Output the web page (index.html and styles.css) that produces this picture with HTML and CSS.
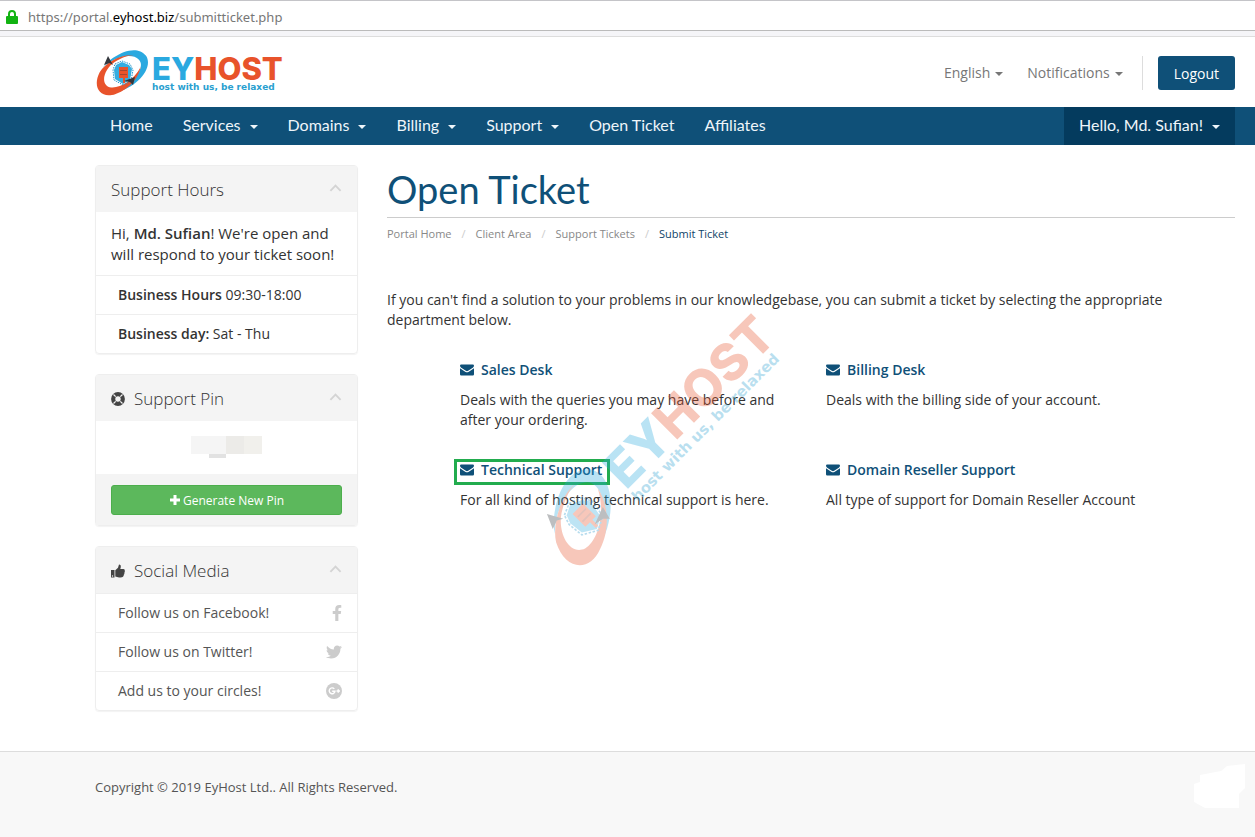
FILE: index.html
```html
<!DOCTYPE html>
<html lang="en">

<head>
    <meta charset="utf-8">
    <title>Open Ticket - EyHost</title>
    <link rel="stylesheet" href="styles.css">
</head>

<body>

    <!-- Shared icons -->
    <svg class="sprite" width="0" height="0" aria-hidden="true">
        <symbol id="logo-mark" viewBox="0 0 56 48">
            <g transform="translate(27 23) rotate(-36)">
                <path fill="#2aa9e0" fill-rule="evenodd" d="M-13 -14.500C-4 -19 28 -18 29 1C28 16 2 21 -17 13C4 16 22 10 21 0C19 -12 -2 -17 -13 -14.500Z" />
                <path fill="#e8532b" d="M19 -7C10 -15 -8 -17 -18 -13C-34 -5 -33 10 -18 14C-3 19 12 13 18 7C4 14 -13 12 -19 5C-25 -4 -12 -13 0 -12.500C8 -12 15 -10 19 -7Z" />
            </g>
            <path fill="#35ade0" d="M21 16L27 13L34 16L37 20L35 31L28 35L20 30L19 21Z" />
            <path fill="none" stroke="#2496cb" stroke-width="1" stroke-dasharray="1.500 1" d="M20 15L27 12L35 15L38 21L36 32L28 36L19 31L18 21Z" />
            <path fill="#e8532b" d="M24 18h9v11h-3v5h-2v-5h-4z" />
            <path stroke="#a8452f" stroke-width="1" d="M25 21.500h7M25 25.500h7" />
            <path fill="#33373d" d="M13 7L18 16L14.500 14L9 16Z" />
            <path fill="#33373d" d="M40 28L38 36L35 33L29 32Z" />
        </symbol>
        <symbol id="envelope" viewBox="0 0 14 12">
            <path fill="currentColor" d="M1.200 0.500h11.600Q14 0.500 14 1.800Q14 2.900 12.800 3.700L8.200 6.800Q7 7.500 5.800 6.800L1.200 3.700Q0 2.900 0 1.800Q0 0.500 1.200 0.500ZM0 4.200L5.200 7.700Q7 8.900 8.800 7.700L14 4.200V10.300Q14 11.500 12.800 11.500H1.200Q0 11.500 0 10.300Z" />
        </symbol>
        <symbol id="chevron" viewBox="0 0 14 8">
            <path fill="none" stroke="currentColor" stroke-width="2" d="M1.500 7L7 1.500L12.500 7" />
        </symbol>
    </svg>

    <div class="address-bar">
        <svg class="lock" viewBox="0 0 12 14" aria-hidden="true">
            <path fill="none" stroke="#12b312" stroke-width="2" d="M3 7V4a3 3 0 0 1 6 0v3" />
            <rect x="0" y="6" width="12" height="8" rx="1" fill="#12b312" />
        </svg>
        <span>https://portal.<b>eyhost.biz</b>/submitticket.php</span>
    </div>

    <header class="header wrap">
        <a href="#" aria-label="EyHost">
            <svg class="logo" viewBox="0 0 188 48">
                <use href="#logo-mark" width="56" height="48" />
                <text class="logo-name" x="57" y="31"><tspan fill="#2aa9e0">EY</tspan><tspan fill="#e8532b">HOST</tspan></text>
                <text class="logo-tag" x="57" y="41">host with us, be relaxed</text>
            </svg>
        </a>
        <div class="top-nav">
            <button class="top-link caret">English</button>
            <button class="top-link caret">Notifications</button>
            <button class="logout">Logout</button>
        </div>
    </header>

    <nav class="main-nav">
        <div class="wrap nav-inner">
            <a href="#">Home</a>
            <a href="#" class="caret">Services</a>
            <a href="#" class="caret">Domains</a>
            <a href="#" class="caret">Billing</a>
            <a href="#" class="caret">Support</a>
            <a href="#">Open Ticket</a>
            <a href="#">Affiliates</a>
            <a href="#" class="caret account">Hello, Md. Sufian!</a>
        </div>
    </nav>

    <div class="wrap page">
        <aside class="sidebar">
            <section class="panel">
                <h3>Support Hours <svg class="chevron"><use href="#chevron" /></svg></h3>
                <p class="greeting">Hi, <b>Md. Sufian</b>! We're open and will respond to your ticket soon!</p>
                <div class="row"><span><b>Business Hours</b> 09:30-18:00</span></div>
                <div class="row"><span><b>Business day:</b> Sat - Thu</span></div>
            </section>

            <section class="panel">
                <h3>
                    <svg class="title-icon" viewBox="0 0 14 14">
                        <circle cx="7" cy="7" r="4.800" fill="none" stroke="#444" stroke-width="4.200" />
                        <path stroke="#f5f5f5" stroke-width="1.200" d="M2.500 2.500L4.700 4.700M9.300 9.300L11.500 11.500M11.500 2.500L9.300 4.700M4.700 9.300L2.500 11.500" />
                    </svg>
                    Support Pin <svg class="chevron"><use href="#chevron" /></svg>
                </h3>
                <div class="pin">
                    <svg viewBox="0 0 72 28" aria-hidden="true">
                        <path fill="#f5f5f5" d="M0 4h35v18H0z" />
                        <path fill="#ecebe8" d="M35 4h18v18H35z" />
                        <path fill="#f1f0ec" d="M53 4h18v18H53z" />
                        <path fill="#e2e2e2" d="M18 22h17v4H18z" />
                    </svg>
                </div>
                <div class="panel-footer">
                    <button class="generate">
                        <svg viewBox="0 0 12 12"><path fill="#fff" d="M4.500 1h3v3.500H11v3H7.500V11h-3V7.500H1v-3h3.500z" /></svg>
                        Generate New Pin
                    </button>
                </div>
            </section>

            <section class="panel">
                <h3>
                    <svg class="title-icon" viewBox="0 0 14 14">
                        <path fill="#444" d="M0 6h3.500v7.500H0zM4.300 6.300L7 3.800L8 0.500Q10.300 0.300 9.800 3L9.300 5H12.500Q14 5.200 13.800 6.800Q14 8 13.400 8.700Q13.600 10 12.800 10.800Q12.900 12 12 12.800Q11 13.700 8 13.400Q6 13 4.300 12.500Z" />
                        <circle cx="1.500" cy="12" r="0.700" fill="#f5f5f5" />
                    </svg>
                    Social Media <svg class="chevron"><use href="#chevron" /></svg>
                </h3>
                <a href="#" class="row">Follow us on Facebook!
                    <svg class="facebook" viewBox="0 0 320 512"><path fill="currentColor" d="M279 288l14-93h-89v-60c0-25 13-50 53-50h40V6S260 0 225 0c-73 0-121 44-121 125v70H23v93h81v224h100V288z" /></svg>
                </a>
                <a href="#" class="row">Follow us on Twitter!
                    <svg class="social" viewBox="0 0 512 512"><path fill="currentColor" d="M459 152c1 4 1 9 1 13 0 139-106 299-299 299-59 0-115-17-161-47 8 1 17 1 25 1 49 0 94-16 131-45-47-1-85-31-98-72 6 1 13 1 19 1 10 0 19-1 28-3-48-10-84-52-84-103v-2c14 8 30 13 47 14-28-19-46-51-46-88 0-19 5-37 14-53 51 64 129 106 216 110-2-8-2-16-2-24 0-58 46-105 105-105 30 0 57 13 76 33 24-4 47-13 67-25-8 25-24 45-46 58 21-3 42-8 60-16-14 20-32 39-53 54z" /></svg>
                </a>
                <a href="#" class="row">Add us to your circles!
                    <svg class="social" viewBox="0 0 16 16">
                        <circle cx="8" cy="8" r="8" fill="currentColor" />
                        <path fill="none" stroke="#fff" stroke-width="1.400" d="M8.300 5.900A2.900 2.900 0 1 0 9 8.200H6.200M10.500 8h3.500M12.250 6.250v3.500" />
                    </svg>
                </a>
            </section>
        </aside>

        <main class="content">
            <h1>Open Ticket</h1>
            <nav class="breadcrumb">
                <a href="#">Portal Home</a>
                <a href="#">Client Area</a>
                <a href="#">Support Tickets</a>
                <span class="current">Submit Ticket</span>
            </nav>
            <p class="intro">If you can't find a solution to your problems in our knowledgebase, you can submit a ticket by selecting the appropriate department below.</p>

            <div class="departments">
                <div>
                    <a href="#" class="dept"><svg><use href="#envelope" /></svg>Sales Desk</a>
                    <p>Deals with the queries you may have before and after your ordering.</p>
                </div>
                <div>
                    <a href="#" class="dept"><svg><use href="#envelope" /></svg>Billing Desk</a>
                    <p>Deals with the billing side of your account.</p>
                </div>
                <div>
                    <a href="#" class="dept marked"><svg><use href="#envelope" /></svg>Technical Support</a>
                    <p>For all kind of hosting technical support is here.</p>
                </div>
                <div>
                    <a href="#" class="dept"><svg><use href="#envelope" /></svg>Domain Reseller Support</a>
                    <p>All type of support for Domain Reseller Account</p>
                </div>
            </div>

            <svg class="watermark" viewBox="0 0 188 48" aria-hidden="true">
                <use href="#logo-mark" width="56" height="48" />
                <text class="logo-name" x="57" y="31"><tspan fill="#2aa9e0">EY</tspan><tspan fill="#e8532b">HOST</tspan></text>
                <text class="logo-tag" x="57" y="41">host with us, be relaxed</text>
            </svg>
        </main>
    </div>

    <footer class="footer">
        <div class="wrap footer-inner">
            <p>Copyright © 2019 EyHost Ltd.. All Rights Reserved.</p>
        </div>
        <svg class="patch" viewBox="0 0 54 46" aria-hidden="true">
            <path fill="#fff" d="M7 11L28 7L34 2L52 0V24L46 30V44H12L1 38V20L7 18Z" />
        </svg>
    </footer>

</body>

</html>
```
FILE: styles.css
```css
* {
    box-sizing: border-box;
}

body {
    margin: 0;
    min-height: 100vh;
    display: flex;
    flex-direction: column;
    font-family: "Open Sans", sans-serif;
    font-size: 14px;
    line-height: 20px;
    color: #333;
    background-color: #fff;
}

h1,
h3,
p {
    margin: 0;
}

a {
    color: inherit;
    text-decoration: none;
}

b {
    font-weight: 600;
}

button {
    font-family: inherit;
    border: none;
    background: none;
    cursor: pointer;
}

.sprite {
    position: absolute;
}

.wrap {
    padding-left: 95px;
    padding-right: 20px;
}

.caret::after {
    content: "";
    display: inline-block;
    margin-left: 5px;
    vertical-align: middle;
    border-top: 4px solid;
    border-left: 4px solid transparent;
    border-right: 4px solid transparent;
}

/* Address bar */
.address-bar {
    display: flex;
    align-items: center;
    gap: 10px;
    height: 37px;
    padding: 0 6px 5px;
    font-family: "Noto Sans", sans-serif;
    font-size: 13px;
    color: #777;
    background: linear-gradient(#fff 0 29px, #bbb 29px 30px, #f5f5f8 30px 35px, #ddd 35px);
    border-top: 1px solid #c4c4c8;
}

.address-bar b {
    font-weight: 400;
    color: #000;
}

.lock {
    width: 12px;
    height: 14px;
}

/* Header */
.header {
    display: flex;
    justify-content: space-between;
    align-items: center;
    height: 70px;
    padding-top: 2px;
}

.logo {
    display: block;
    width: 188px;
    height: 48px;
}

.logo-name {
    font-family: Inter, sans-serif;
    font-size: 31px;
    font-weight: 800;
}

.logo-tag {
    font-family: "DejaVu Sans", sans-serif;
    font-size: 9px;
    font-weight: 700;
    fill: #2a9fd0;
}

.top-nav {
    display: flex;
    align-items: center;
}

.top-link {
    padding: 0 0 2px;
    margin-right: 24px;
    font-size: 14px;
    color: #777;
}

.top-link:nth-child(2) {
    height: 34px;
    margin-right: 15px;
    padding-right: 19px;
    border-right: 1px solid #ddd;
}

.logout {
    height: 34px;
    padding: 0 16px;
    font-size: 14px;
    color: #fff;
    background-color: #0f5078;
    border-radius: 3px;
}

.main-nav {
    background-color: #0f5078;
}

.nav-inner {
    display: flex;
    font-family: Lato, sans-serif;
    font-size: 16px;
    line-height: 36px;
    color: #eef5fa;
}

.nav-inner a {
    padding: 0 15px 2px;
}

.nav-inner .caret::after {
    margin-left: 9px;
}

.nav-inner .account {
    margin-left: auto;
    background-color: #043b5e;
}

/* Sidebar */
.page {
    display: flex;
    gap: 29px;
    padding-top: 20px;
    padding-bottom: 40px;
}

.sidebar {
    flex: 0 0 263px;
    display: flex;
    flex-direction: column;
    gap: 20px;
}

.panel {
    border: 1px solid #eee;
    border-radius: 4px;
    box-shadow: 0 1px 1px rgba(0, 0, 0, 0.05);
}

.panel h3 {
    display: flex;
    align-items: center;
    height: 46px;
    padding: 2px 15px 0;
    font-size: 17px;
    font-weight: 300;
    background-color: #f4f4f4;
}

.title-icon {
    width: 14px;
    height: 14px;
    margin-right: 9px;
}

.chevron {
    width: 13px;
    height: 8px;
    margin-left: auto;
    margin-bottom: 4px;
    color: #d4d4d4;
}

.greeting {
    padding: 11px 15px 10px;
    font-size: 15px;
    line-height: 21px;
}

.row {
    display: flex;
    align-items: center;
    justify-content: space-between;
    height: 39px;
    padding: 0 15px 0 22px;
    border-top: 1px solid #eee;
}

a.row {
    color: #555;
}

.social,
.facebook {
    width: 16px;
    height: 16px;
    color: #ccc;
}

.facebook {
    width: 10px;
}

.pin {
    padding: 11px 0 14px;
    text-align: center;
}

.pin svg {
    display: block;
    width: 72px;
    height: 28px;
    margin: 0 auto;
}

.panel-footer {
    padding: 11px 15px 10px;
    background-color: #f4f4f4;
}

.generate {
    display: flex;
    align-items: center;
    justify-content: center;
    gap: 2px;
    width: 100%;
    height: 30px;
    font-size: 12px;
    color: #fff;
    background-color: #5cb85c;
    border: 1px solid #4cae4c;
    border-radius: 3px;
}

.generate svg {
    width: 12px;
    height: 12px;
}

/* Content */
.content {
    flex: 1;
    position: relative;
}

h1 {
    padding-bottom: 3px;
    font-family: Lato, sans-serif;
    font-size: 38px;
    font-weight: 400;
    line-height: 49px;
    color: #0f5078;
    border-bottom: 1px solid #ccc;
}

.breadcrumb {
    display: flex;
    padding-top: 6px;
    font-size: 11px;
    color: #888;
}

.breadcrumb a::after {
    content: "/";
    padding: 0 10px;
    color: #ccc;
}

.breadcrumb .current {
    color: #0f4468;
}

.intro {
    margin-top: 46px;
}

.departments {
    display: grid;
    grid-template-columns: 1fr 1fr;
    gap: 30px;
    padding: 30px 73px 0;
}

.dept {
    display: flex;
    align-items: center;
    gap: 7px;
    width: fit-content;
    margin-bottom: 10px;
    font-weight: 600;
    color: #0f5078;
}

.dept svg {
    width: 14px;
    height: 12px;
}

.marked {
    margin: -1px -6px 5px;
    padding: 0 5px 4px 3px;
    line-height: 16px;
    border: 3px solid #22ac4e;
}

.watermark {
    position: absolute;
    left: 119px;
    top: 235px;
    width: 310px;
    height: 79px;
    opacity: 0.32;
    overflow: visible;
    transform: rotate(-45deg);
    pointer-events: none;
}

/* Footer */
.footer {
    flex: 1;
    display: flex;
    justify-content: space-between;
    background-color: #f8f8f8;
    border-top: 1px solid #ddd;
}

.footer-inner {
    padding-top: 25px;
    font-size: 13px;
    color: #555;
}

.patch {
    width: 54px;
    height: 46px;
    margin: 12px 8px 0 0;
}
```
